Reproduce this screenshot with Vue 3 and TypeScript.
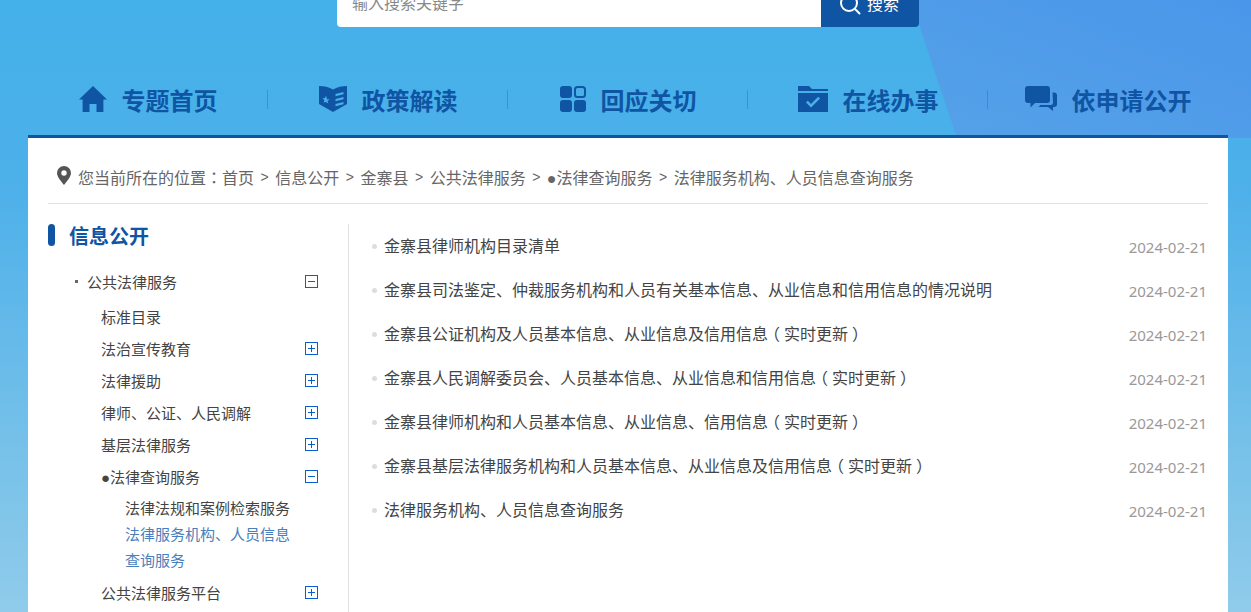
<template>
  <div class="page">
    <div class="bg-shape"></div>
    <div class="search">
      <div class="search-input"><span>输入搜索关键字</span></div>
      <div class="search-btn">
        <div class="search-btn-inner">
          <svg width="22" height="22" viewBox="0 0 22 22" fill="none" stroke="#fff" stroke-width="2" stroke-linecap="round">
            <circle cx="10" cy="10" r="8" />
            <path d="M16 16 20.500 20.500" />
          </svg>
          <span>搜索</span>
        </div>
      </div>
    </div>

    <nav class="nav">
      <a v-for="item in navItems" :key="item.label" class="nav-item">
        <svg class="nav-icon" :width="item.w" height="28" :viewBox="`0 0 ${item.w} 28`" fill="#0f55a3" v-html="item.icon"></svg>
        <span>{{ item.label }}</span>
      </a>
    </nav>

    <main class="main">
      <div class="crumb">
        <svg width="14" height="19" viewBox="0 0 14 19" class="pin">
          <path fill="#555" fill-rule="evenodd" d="M7 0a7 7 0 0 1 7 7c0 4-4.500 8.500-7 12C4.500 15.500 0 11 0 7a7 7 0 0 1 7-7Zm0 4.300a2.700 2.700 0 1 0 0 5.400 2.700 2.700 0 0 0 0-5.400Z" />
        </svg>
        <span>您当前所在的位置<span class="colon">：</span></span>
        <template v-for="(c, i) in crumbs" :key="c">
          <span v-if="i > 0" class="crumb-sep">&gt;</span>
          <span>{{ c }}</span>
        </template>
      </div>

      <div class="content">
        <aside class="side">
          <h2 class="side-title">信息公开</h2>
          <div class="tree-root">
            <span class="dot"></span>
            <span class="tree-label">公共法律服务</span>
            <span class="toggle"><i class="h"></i></span>
          </div>
          <template v-for="node in tree" :key="node.label">
            <div class="tree-row">
              <span class="tree-label">{{ node.label }}</span>
              <span v-if="node.state" class="toggle">
                <i class="h"></i><i v-if="node.state === 'plus'" class="v"></i>
              </span>
            </div>
            <div v-if="node.children" class="tree-sub">
              <a v-for="c in node.children" :key="c.label" :class="{ active: c.active }">{{ c.label }}</a>
            </div>
          </template>
        </aside>

        <ul class="list">
          <li v-for="row in rows" :key="row">
            <span class="bullet"></span>
            <span class="row-title">
              <span v-for="(part, i) in splitParens(row)" :key="i" :class="{ paren: isParen(part) }">{{ part }}</span>
            </span>
            <span class="row-date">2024-02-21</span>
          </li>
        </ul>
      </div>
    </main>
  </div>
</template>

<script setup lang="ts">
interface SubNode {
  label: string
  active?: boolean
}

interface TreeNode {
  label: string
  state?: 'plus' | 'minus'
  children?: SubNode[]
}

const navItems = [
  {
    label: '专题首页',
    w: 28,
    icon: '<path d="M14 1 28 14.500h-3.600V27h-6.900v-8h-7v8H3.600V14.500H0Z"/>'
  },
  {
    label: '政策解读',
    w: 28,
    icon: '<path fill-rule="evenodd" d="M0 1c5 0 10 1 14 3.500C18 2 23 1 28 1v18l-14 8-14-8Zm7 9.500-1 2.600-2.700.1 2.100 1.700-.7 2.600L7 17.100l2.300 1.500-.7-2.600 2.100-1.700-2.700-.1ZM16.500 9v2.200l8-2V7Zm0 5v2.200l8-2V12Zm0 5v2.200l8-2V17Z"/>'
  },
  {
    label: '回应关切',
    w: 26,
    icon: '<rect x="0" y="1" width="12" height="12" rx="3"/><rect x="15" y="2" width="10" height="10" rx="2.500" fill="none" stroke="#0f55a3" stroke-width="2"/><rect x="0" y="15" width="12" height="12" rx="3"/><rect x="14" y="15" width="12" height="12" rx="3"/>'
  },
  {
    label: '在线办事',
    w: 30,
    icon: '<path d="M0 1h11l3 3h16v2H0Z"/><path fill-rule="evenodd" d="M0 8h30v19H0Zm8 9.500 5 5 9-9-1.800-1.700-7.200 7.200-3.200-3.200Z"/>'
  },
  {
    label: '依申请公开',
    w: 32,
    icon: '<path d="M3 1h19a3 3 0 0 1 3 3v11a3 3 0 0 1-3 3H10l-4.500 4.500V18H3a3 3 0 0 1-3-3V4a3 3 0 0 1 3-3Z"/><path d="M27.500 7.500H29a3 3 0 0 1 3 3V19a3 3 0 0 1-3 3h-1v4l-5-4h-9.500l2-2h10a2.500 2.500 0 0 0 2.500-2.500Z"/>'
  }
]

const crumbs = ['首页', '信息公开', '金寨县', '公共法律服务', '●法律查询服务', '法律服务机构、人员信息查询服务']

const tree: TreeNode[] = [
  { label: '标准目录' },
  { label: '法治宣传教育', state: 'plus' },
  { label: '法律援助', state: 'plus' },
  { label: '律师、公证、人民调解', state: 'plus' },
  { label: '基层法律服务', state: 'plus' },
  {
    label: '●法律查询服务',
    state: 'minus',
    children: [
      { label: '法律法规和案例检索服务' },
      { label: '法律服务机构、人员信息查询服务', active: true }
    ]
  },
  { label: '公共法律服务平台', state: 'plus' }
]

const rows = [
  '金寨县律师机构目录清单',
  '金寨县司法鉴定、仲裁服务机构和人员有关基本信息、从业信息和信用信息的情况说明',
  '金寨县公证机构及人员基本信息、从业信息及信用信息（实时更新）',
  '金寨县人民调解委员会、人员基本信息、从业信息和信用信息（实时更新）',
  '金寨县律师机构和人员基本信息、从业信息、信用信息（实时更新）',
  '金寨县基层法律服务机构和人员基本信息、从业信息及信用信息（实时更新）',
  '法律服务机构、人员信息查询服务'
]

// the reference font centres full-width brackets in their cell
function splitParens(text: string): string[] {
  return text.split(/([（）])/).filter(Boolean)
}

function isParen(part: string): boolean {
  return part === '（' || part === '）'
}
</script>

<style>
html,
body {
  margin: 0;
  overflow: hidden;
}
</style>

<style scoped>
.page {
  position: relative;
  height: 612px;
  overflow: hidden;
  font-family: "Liberation Sans", "Noto Sans CJK SC", sans-serif;
  background: linear-gradient(180deg, #44b0ea 0%, #4db0e9 30%, #90cbea 100%);
}

.bg-shape {
  position: absolute;
  top: 0;
  left: 911px;
  right: 0;
  height: 138px;
  background: linear-gradient(200deg, #4a96ea 0%, #55a2e8 100%);
  clip-path: polygon(0 0, 100% 0, 100% 100%, 13.500% 100%, 6% 45%);
}

.search {
  position: relative;
  display: flex;
  width: 582px;
  height: 27px;
  margin-left: 337px;
}

.search-input {
  flex: 1;
  background: #fff;
  border-radius: 0 0 0 4px;
  overflow: hidden;
  padding-left: 15px;
  color: #888;
  font-size: 16px;
  line-height: 20px;
}

.search-input span {
  display: block;
  margin-top: -6px;
}

.search-btn {
  width: 98px;
  background: #0f55a3;
  border-radius: 0 0 4px 0;
  overflow: hidden;
  color: #fff;
  font-size: 16px;
}

.search-btn-inner {
  display: flex;
  align-items: center;
  justify-content: center;
  gap: 6px;
  margin: -7px 2px 0 0;
  height: 22px;
}

.search-btn-inner span {
  margin-top: -3px;
}

.nav {
  position: relative;
  display: flex;
  width: 1200px;
  height: 108px;
  margin-left: 28px;
  box-sizing: border-box;
  padding-top: 58px;
}

.nav-item {
  position: relative;
  display: flex;
  align-items: center;
  justify-content: center;
  gap: 15px;
  width: 240px;
  height: 28px;
  color: #0f55a3;
  font-size: 24px;
  font-weight: 700;
  white-space: nowrap;
}

.nav-item:not(:last-child)::after {
  content: "";
  position: absolute;
  right: 0;
  top: 5px;
  height: 19px;
  width: 1px;
  background: rgba(15, 85, 163, 0.3);
}

.main {
  position: relative;
  width: 1200px;
  min-height: 480px;
  margin-left: 28px;
  box-sizing: border-box;
  border-top: 3px solid #0f55a3;
  background: #fff;
  padding: 0 20px;
}

.crumb {
  display: flex;
  align-items: center;
  height: 66px;
  box-sizing: border-box;
  padding: 13px 0 0 9px;
  border-bottom: 1px solid #e2e2e2;
  color: #666;
  font-size: 16px;
  white-space: nowrap;
}

.pin {
  margin-right: 7px;
  flex: none;
  margin-top: -3px;
}

.colon {
  font-family: "Noto Sans CJK TC", sans-serif;
}

.crumb-sep {
  margin: 0 6.500px;
  font-size: 14px;
}

.content {
  display: flex;
  margin-top: 20px;
}

.side {
  width: 300px;
  flex: none;
  padding-bottom: 20px;
  border-right: 1px solid #e2e2e2;
}

.side-title {
  position: relative;
  margin: 0 0 13px;
  padding: 1px 0 0 21px;
  font-size: 20px;
  line-height: 24px;
  color: #0f55a3;
  font-weight: 700;
}

.side-title::before {
  content: "";
  position: absolute;
  left: 0;
  top: 0;
  width: 7px;
  height: 22px;
  border-radius: 4px;
  background: #0f55a3;
}

.tree-root,
.tree-row {
  display: flex;
  align-items: center;
  height: 32px;
  padding-right: 30px;
  color: #444;
  font-size: 15px;
}

.tree-root {
  padding-left: 27px;
  height: 38px;
}

.tree-row {
  padding-left: 53px;
}

.dot {
  width: 3px;
  height: 3px;
  background: #666;
  margin-right: 9px;
}

.tree-label {
  flex: 1;
}

.toggle {
  position: relative;
  width: 11px;
  height: 11px;
  border: 1px solid #0a5fd0;
}

.toggle i {
  position: absolute;
  background: #0a5fd0;
}

.toggle .h {
  left: 2px;
  right: 2px;
  top: 5px;
  height: 1px;
}

.toggle .v {
  top: 2px;
  bottom: 2px;
  left: 5px;
  width: 1px;
}

.tree-sub {
  padding: 4px 50px 2px 77px;
  font-size: 15px;
  line-height: 26px;
  color: #444;
}

.tree-sub a {
  display: block;
}

.tree-sub a.active {
  color: #4a7fbd;
}

.list {
  flex: 1;
  margin: 0;
  padding: 0 0 0 23px;
  list-style: none;
}

.list li {
  display: flex;
  align-items: center;
  height: 44px;
}

.bullet {
  width: 5px;
  height: 5px;
  border-radius: 50%;
  background: #ddd;
  margin-right: 7px;
  flex: none;
}

.row-title {
  flex: 1;
  margin-top: -2px;
  color: #444;
  font-size: 16px;
}

.paren {
  font-feature-settings: "halt";
  padding: 0 4px;
}

.row-date {
  margin: 1px 1px 0 0;
  color: #999;
  font-family: "Noto Sans", sans-serif;
  font-size: 15px;
}
</style>
